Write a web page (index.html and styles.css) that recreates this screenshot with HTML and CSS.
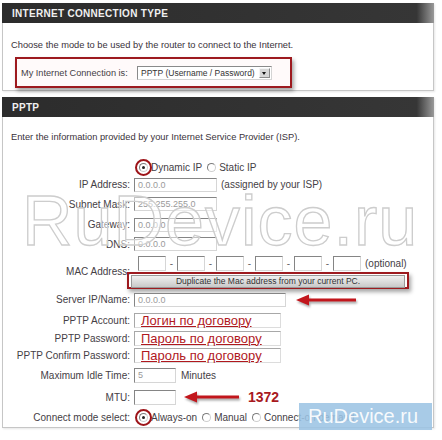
FILE: index.html
```html
<!DOCTYPE html>
<html lang="en">
<head>
<meta charset="UTF-8">
<meta name="viewport" content="width=device-width, initial-scale=1.0">
<title>Internet Connection - PPTP</title>
<link rel="stylesheet" href="styles.css">
</head>
<body>
  <div class="frame">
    <!-- Connection type -->
    <section class="box">
      <h2 class="bar">INTERNET CONNECTION TYPE</h2>
      <div class="box-body intro">
        <p class="lead">Choose the mode to be used by the router to connect to the Internet.</p>
        <div class="conn mark-box">
          <label>My Internet Connection is:</label>
          <div class="select">PPTP (Username / Password)<span class="drop"></span></div>
        </div>
      </div>
    </section>

    <!-- PPTP settings -->
    <section class="box pptp">
      <h2 class="bar">PPTP</h2>
      <div class="box-body">
        <p class="lead">Enter the information provided by your Internet Service Provider (ISP).</p>
        <div class="form">
          <span></span>
          <div class="field">
            <span class="radio on mark"></span><span>Dynamic IP</span>
            <span class="radio gap"></span><span>Static IP</span>
          </div>

          <label>IP Address:</label>
          <div class="field"><span class="input ip">0.0.0.0</span><span class="note">(assigned by your ISP)</span></div>

          <label>Subnet Mask:</label>
          <div class="field"><span class="input ip">255.255.255.0</span></div>

          <label>Gateway:</label>
          <div class="field"><span class="input ip">0.0.0.0</span></div>

          <label>DNS:</label>
          <div class="field"><span class="input ip">0.0.0.0</span></div>

          <label class="span2">MAC Address:</label>
          <div class="field mac">
            <span class="input octet"></span><span class="dash">-</span>
            <span class="input octet"></span><span class="dash">-</span>
            <span class="input octet"></span><span class="dash">-</span>
            <span class="input octet"></span><span class="dash">-</span>
            <span class="input octet"></span><span class="dash">-</span>
            <span class="input octet"></span><span class="note">(optional)</span>
          </div>
          <div class="field">
            <div class="dup mark-box"><span class="btn">Duplicate the Mac address from your current PC.</span></div>
          </div>

          <label>Server IP/Name:</label>
          <div class="field">
            <span class="input server">0.0.0.0</span>
            <svg class="arrow long" width="60" height="14" viewBox="0 0 60 14"><path d="M11 7H60" stroke="#c2161c" stroke-width="3"/><path d="M0 7L13 1.5V12.5Z" fill="#c2161c"/></svg>
          </div>

          <label>PPTP Account:</label>
          <div class="field"><span class="input cred">Логин по договору</span></div>

          <label>PPTP Password:</label>
          <div class="field"><span class="input cred">Пароль по договору</span></div>

          <label>PPTP Confirm Password:</label>
          <div class="field"><span class="input cred">Пароль по договору</span></div>

          <label>Maximum Idle Time:</label>
          <div class="field"><span class="input small">5</span><span class="note units">Minutes</span></div>

          <label>MTU:</label>
          <div class="field">
            <span class="input small"></span>
            <svg class="arrow short" width="55" height="14" viewBox="0 0 55 14"><path d="M11 7H55" stroke="#c2161c" stroke-width="3"/><path d="M0 7L13 1.5V12.5Z" fill="#c2161c"/></svg>
            <span class="mtu">1372</span>
          </div>

          <label>Connect mode select:</label>
          <div class="field">
            <span class="radio on mark"></span><span>Always-on</span>
            <span class="radio gap"></span><span>Manual</span>
            <span class="radio gap"></span><span>Connect-on demand</span>
          </div>
        </div>
      </div>
    </section>

    <!-- watermarks -->
    <div class="wm">RuDevice.ru</div>
    <div class="badge">RuDevice.ru</div>
  </div>
</body>
</html>
```

FILE: styles.css
```css
body { margin: 0; background: #fff; font-family: "Liberation Sans", Arial, sans-serif; font-size: 10px; color: #454045; }
.frame { position: relative; width: 442px; height: 440px; padding-top: 3px; box-sizing: border-box; overflow: hidden; }

.box { margin-left: 2px; width: 432px; border: 1px solid #c6c6c6; border-top: 0; box-sizing: border-box; box-shadow: 1px 1px 2px rgba(0,0,0,.1); }
.pptp { margin-top: 6px; }
.bar { margin: 0 -1px; height: 20px; line-height: 21px; padding-left: 10px; background: linear-gradient(to right, #2c2c2c, #363636 96%, #9a9a9a); color: #f0f0f0; font-size: 10px; font-weight: bold; letter-spacing: .3px; }
.lead { margin: 0; padding-left: 8px; line-height: 12px; font-size: 9.3px; color: #3a323a; white-space: nowrap; }
.intro { padding-bottom: 2px; }
.intro .lead { padding-top: 16px; }
.pptp .lead { padding-top: 14px; }

.mark-box { border: 2px solid #9d1a1f; box-shadow: 2px 3px 4px rgba(0,0,0,.35); box-sizing: border-box; }
.conn { margin: 6px 0 0 12px; width: 277px; height: 31px; display: flex; align-items: center; padding-left: 4px; background: #fffafa; }
.conn label { width: 116px; font-size: 9.2px; white-space: nowrap; }
.select { width: 135px; height: 14px; box-sizing: border-box; border: 1px solid; border-color: #8a8a8a #d4d4d4 #d4d4d4 #8a8a8a; display: flex; align-items: center; justify-content: space-between; padding-left: 3px; font-size: 8.5px; color: #333; background: #fff; }
.drop { position: relative; width: 11px; height: 10px; margin-right: 1px; background: #d6d6d6; border: 1px solid; border-color: #f4f4f4 #8a8a8a #8a8a8a #f4f4f4; box-sizing: border-box; }
.drop::after { content: ""; position: absolute; left: 2px; top: 3px; border: 2.5px solid transparent; border-top: 3px solid #111; }

.form { display: grid; grid-template-columns: 127px auto; column-gap: 4px; grid-template-rows: 18px 17px 22px 19px 20px 18px 16px 23px 18px 18px 17px 23px 20px 20px; align-items: center; margin-top: 15px; }
.form label { text-align: right; white-space: nowrap; }
.form .span2 { grid-row: span 2; }
.field { display: flex; align-items: center; white-space: nowrap; }

.input { display: block; box-sizing: border-box; height: 14px; line-height: 12px; padding-left: 3px; border: 1px solid; border-color: #858585 #d6d6d6 #d6d6d6 #858585; background: #fff; color: #9a9a9a; font-size: 9px; }
.ip { width: 83px; }
.note { margin-left: 4px; }
.units { margin-left: 5px; }
.mac .octet { width: 28px; height: 15px; }
.mac .octet:first-child { margin-left: 4px; }
.dash { width: 11px; text-align: center; color: #666; }
.server { width: 152px; }
.cred { width: 147px; height: 15px; line-height: 14px; padding-left: 6px; font-size: 13px; color: #b0181e; text-decoration: underline; border-color: #a8a8a8 #dcdcdc #dcdcdc #a8a8a8; }
.small { width: 42px; height: 15px; }

.dup { margin-left: -7px; width: 282px; height: 17px; padding: 1px 2px; }
.btn { display: block; height: 11px; line-height: 11px; text-align: center; font-size: 8.5px; color: #333; background: linear-gradient(#f0f0f0, #c9c9c9); border: 1px solid #999; }

.radio { position: relative; display: inline-block; width: 9px; height: 9px; margin: 0 3px 0 5px; box-sizing: border-box; border: 1px solid; border-color: #7c7c7c #cfcfcf #cfcfcf #7c7c7c; border-radius: 50%; background: #fff; }
.radio.gap { margin-left: 5px; }
.radio.on::before { content: ""; position: absolute; left: 2px; top: 2px; width: 3px; height: 3px; border-radius: 50%; background: #222; }
.radio.mark::after { content: ""; position: absolute; left: -5px; top: -5px; width: 17px; height: 17px; box-sizing: border-box; border: 2px solid #9d1419; border-radius: 50%; }

.arrow { filter: drop-shadow(1px 2px 1px rgba(0,0,0,.35)); }
.long { margin-left: 10px; }
.short { margin-left: 8px; }
.mtu { margin-left: 9px; font-size: 14px; font-weight: bold; color: #a8191e; }

.wm { position: absolute; left: 22px; top: 186px; font-size: 70px; line-height: 70px; letter-spacing: 1px; color: rgba(255,255,255,.5); -webkit-text-stroke: 1.3px #cdcdcd; white-space: nowrap; pointer-events: none; }
.badge { position: absolute; left: 299px; top: 403px; width: 133px; height: 27px; padding-left: 9px; box-sizing: border-box; background: rgba(156,196,228,.88); color: rgba(255,255,255,.92); font-size: 20px; line-height: 27px; white-space: nowrap; }
```
